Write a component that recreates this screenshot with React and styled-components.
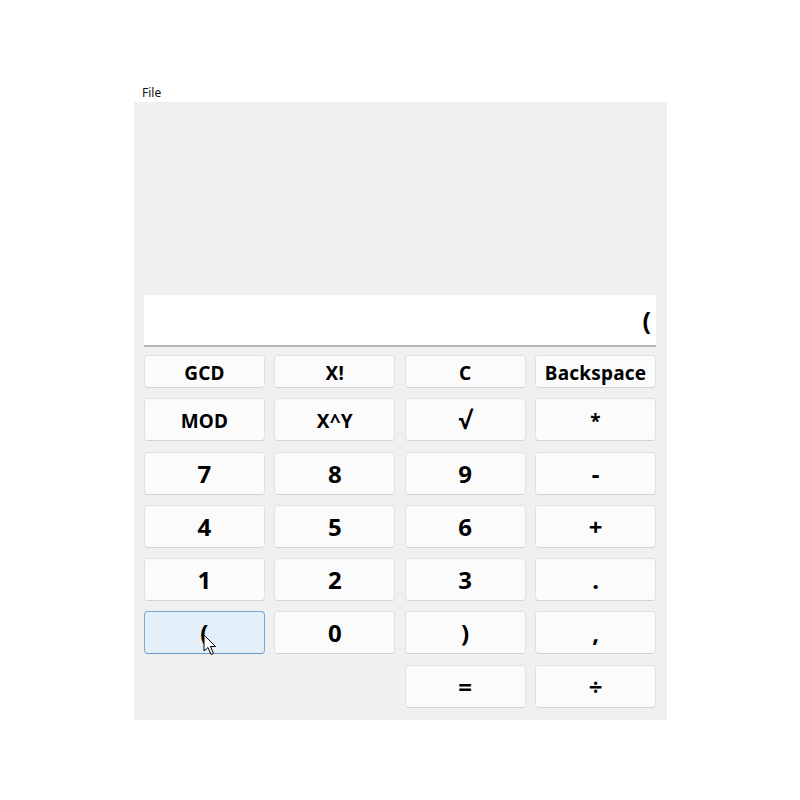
import React from 'react'
import styled, { createGlobalStyle } from 'styled-components'

const GlobalStyle = createGlobalStyle`
   body {
      margin: 0;
      background: #ffffff;
      font-family: 'Noto Sans', 'Open Sans', sans-serif;
   }
`

const StyledPage = styled.div`
   width: 800px;
   height: 800px;
   padding: 84px 0 0 134px;
   box-sizing: border-box;
`

const StyledMenu = styled.div`
   height: 18px;
   padding-left: 8px;
   font-size: 12px;
   line-height: 18px;
   color: #111;
`

const StyledWindow = styled.section`
   width: 533px;
   height: 618px;
   box-sizing: border-box;
   background: #f0f0f0;
   padding: 193px 11px 11px 10px;
   display: flex;
   flex-direction: column;
   gap: 8px;
`

const StyledDisplay = styled.div`
   height: 50px;
   background: #ffffff;
   border-bottom: 2px solid #b4b4b4;
   display: flex;
   align-items: center;
   justify-content: flex-end;
   padding-right: 5px;
   font-size: 25px;
   font-weight: 700;
   color: #000;
`

const StyledKeypad = styled.div`
   display: grid;
   grid-template-columns: repeat(4, 1fr);
   grid-template-rows: 33px repeat(6, 43px);
   column-gap: 9.5px;
   row-gap: 10.3px;
`

const StyledKey = styled.button`
   position: relative;
   margin: 0;
   padding: ${(p) => (p.$big ? '0' : '3px 0 0')};
   border-radius: 4px;
   border: 1px solid ${(p) => (p.$hover ? '#7fa7cf' : '#e1e1e1')};
   border-bottom-color: ${(p) => (p.$hover ? '#6a97c4' : '#d2d2d2')};
   background: ${(p) => (p.$hover ? '#e3eff9' : '#fbfbfb')};
   font-family: 'Noto Sans', 'Open Sans', sans-serif;
   font-weight: 700;
   font-size: ${(p) => (p.$big ? '24px' : '19px')};
   letter-spacing: ${(p) => (p.$big ? '0' : '0.2px')};
   color: #000;
   display: flex;
   align-items: center;
   justify-content: center;
   grid-column: ${(p) => p.$col || 'auto'};
`

const StyledCursor = styled.svg`
   position: absolute;
   left: 58px;
   top: 22px;
`

const keys = [
   { label: 'GCD' },
   { label: 'X!' },
   { label: 'C' },
   { label: 'Backspace' },
   { label: 'MOD' },
   { label: 'X^Y' },
   { label: '√', big: true },
   { label: '*' },
   { label: '7', big: true },
   { label: '8', big: true },
   { label: '9', big: true },
   { label: '-', big: true },
   { label: '4', big: true },
   { label: '5', big: true },
   { label: '6', big: true },
   { label: '+', big: true },
   { label: '1', big: true },
   { label: '2', big: true },
   { label: '3', big: true },
   { label: '.', big: true },
   { label: '(', big: true, hover: true },
   { label: '0', big: true },
   { label: ')', big: true },
   { label: ',', big: true },
   { label: '=', big: true, col: '3' },
   { label: '÷', big: true },
]

const App = () => {
   return (
      <>
         <GlobalStyle />
         <StyledPage>
            <StyledMenu>File</StyledMenu>
            <StyledWindow>
               <StyledDisplay>(</StyledDisplay>
               <StyledKeypad>
                  {keys.map((k) => (
                     <StyledKey key={k.label} $big={k.big} $hover={k.hover} $col={k.col}>
                        {k.label}
                        {k.hover && (
                           <StyledCursor width='14' height='22' viewBox='0 0 14 22'>
                              <path
                                 d='M1 1 L1 17 L5 13.5 L8 20.5 L10.5 19.5 L7.5 12.5 L12.5 12.5 Z'
                                 fill='#ffffff'
                                 stroke='#000000'
                                 strokeWidth='1'
                                 strokeLinejoin='round'
                              />
                           </StyledCursor>
                        )}
                     </StyledKey>
                  ))}
               </StyledKeypad>
            </StyledWindow>
         </StyledPage>
      </>
   )
}

export default App
